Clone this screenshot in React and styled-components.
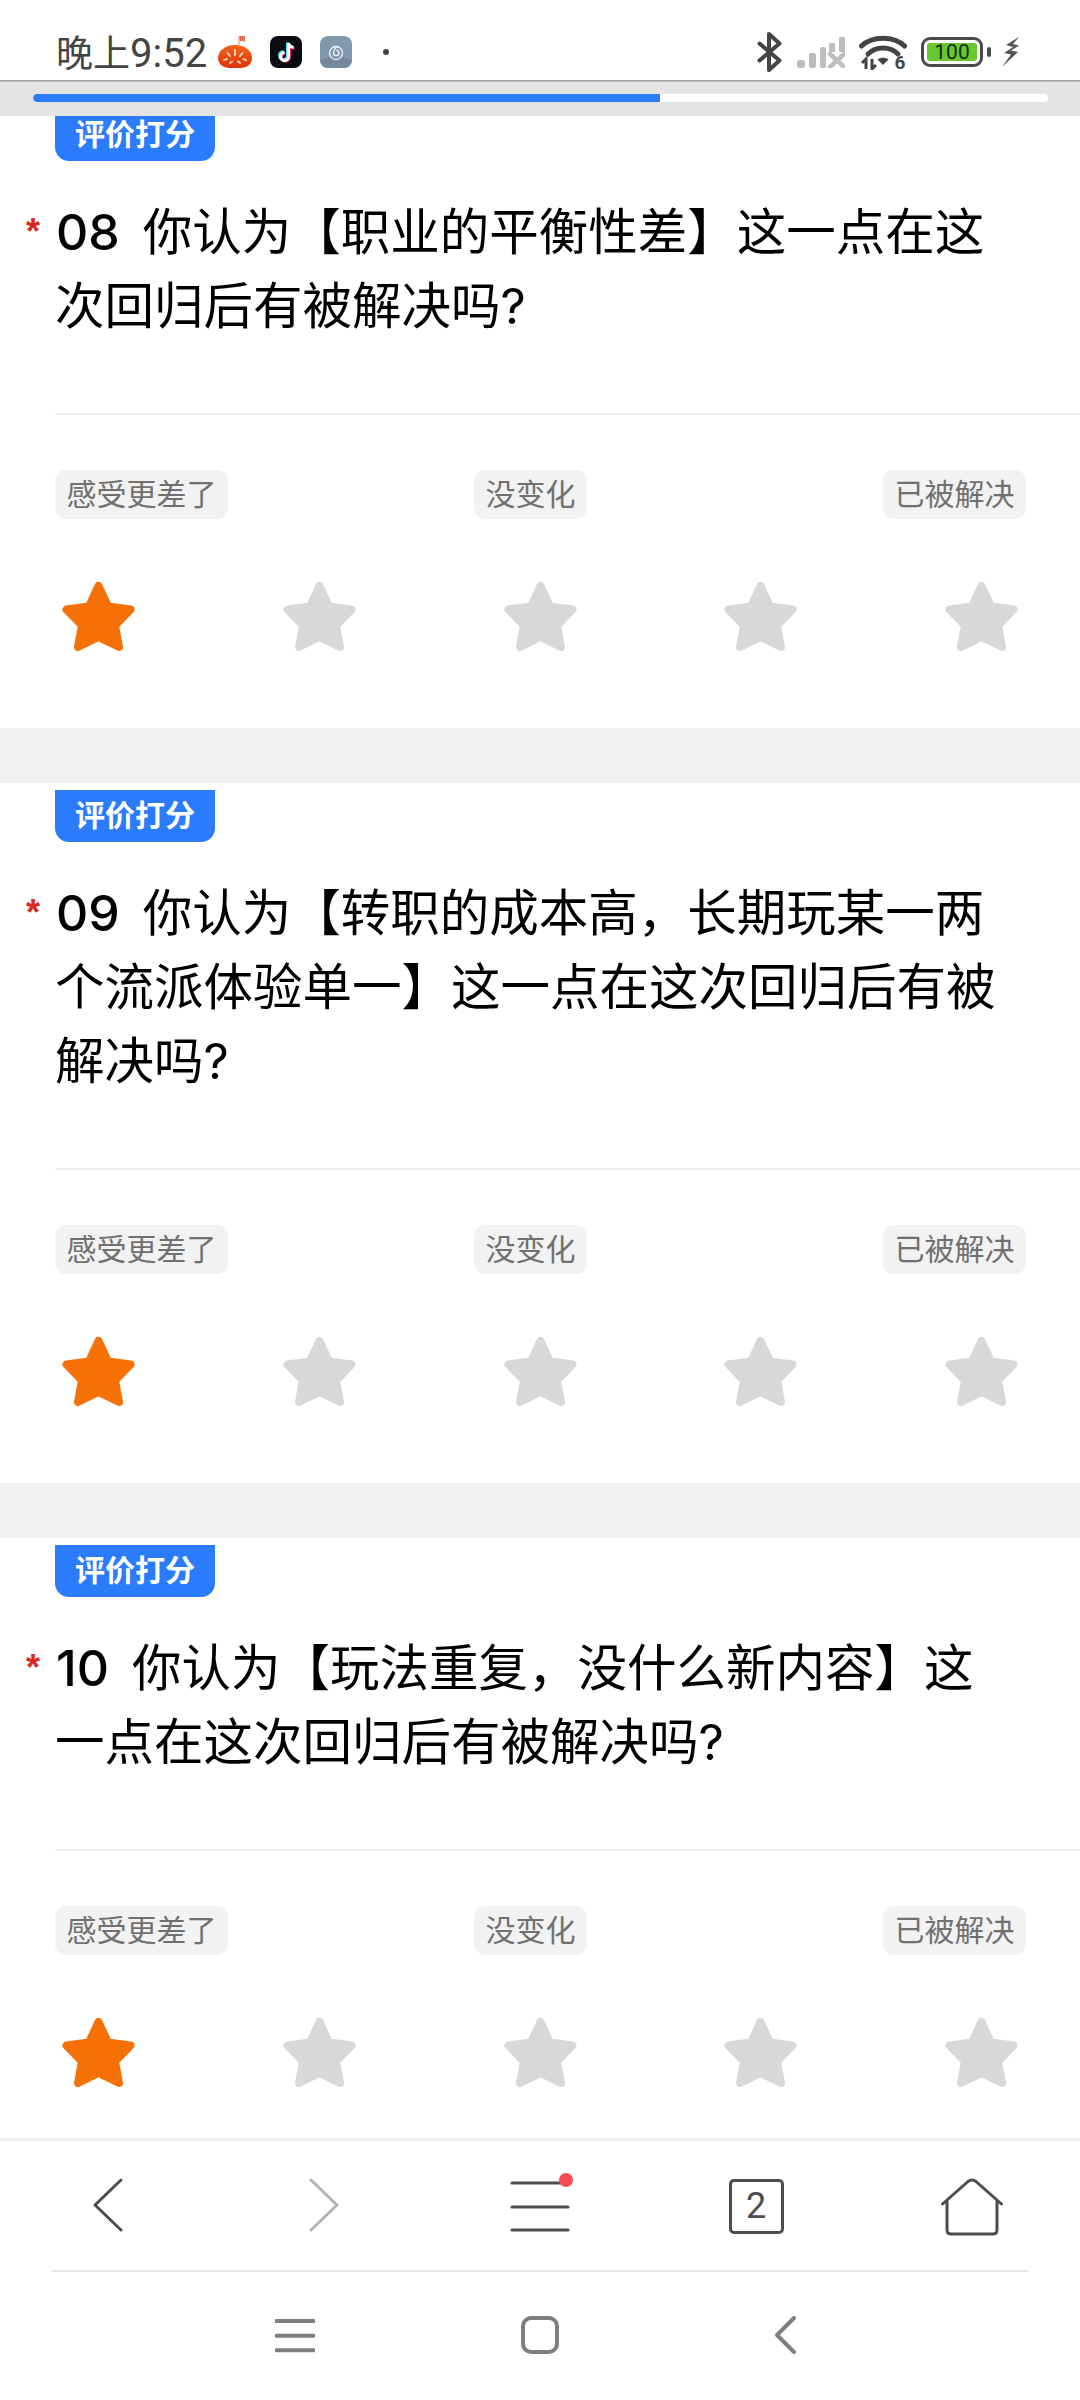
import React from "react";
import styled, { createGlobalStyle } from "styled-components";

const GlobalStyle = createGlobalStyle`
  html, body {
    margin: 0;
    padding: 0;
    background: #fff;
  }
`;

const Page = styled.div`
  width: 1080px;
  height: 2400px;
  display: flex;
  flex-direction: column;
  overflow: hidden;
  background: #fff;
  font-family: "Noto Sans CJK SC", "Noto Sans", sans-serif;
`;

const StatusBar = styled.header`
  flex: none;
  height: 80px;
  box-sizing: border-box;
  display: flex;
  align-items: center;
  padding: 24px 60px 0 56px;
  background: #fff;
`;

const StatusEdge = styled.div`
  flex: none;
  height: 2px;
  background: linear-gradient(#9d9d9d, #c8c8c8);
`;

const Time = styled.span`
  font-size: 37px;
  line-height: 40px;
  color: #444;
  font-family: "Noto Sans CJK SC", sans-serif;
  margin-right: 11px;
  .num {
    font-family: Roboto, sans-serif;
    font-size: 40px;
  }
`;

const AppIcons = styled.div`
  display: flex;
  align-items: center;
  gap: 18px;
`;

const Dot = styled.i`
  width: 6px;
  height: 6px;
  border-radius: 50%;
  background: #444;
  margin-left: 31px;
`;

const StatusRight = styled.div`
  margin-left: auto;
  display: flex;
  align-items: center;
`;

const Battery = styled.div`
  width: 62px;
  height: 30px;
  margin: 0 19px 0 14px;
  box-sizing: border-box;
  border: 3px solid #4a4a4a;
  border-radius: 9px;
  padding: 3px;
  position: relative;
  display: flex;
  &::after {
    content: "";
    position: absolute;
    right: -11px;
    top: 7px;
    width: 4px;
    height: 10px;
    border-radius: 2px;
    background: #4a4a4a;
  }
`;

const BatteryFill = styled.span`
  flex: 1;
  background: #65c92f;
  border-radius: 3px;
  color: #1c2b12;
  font-family: Roboto, sans-serif;
  font-size: 21px;
  line-height: 18px;
  text-align: center;
`;

const ProgressWrap = styled.div`
  flex: none;
  height: 34px;
  box-sizing: border-box;
  padding: 12px 32px 0 33px;
  background: #e4e4e4;
`;

const ProgressTrack = styled.div`
  height: 8px;
  border-radius: 4px;
  background: #fff;
  overflow: hidden;
`;

const ProgressFill = styled.div`
  height: 100%;
  border-radius: 4px 0 0 4px;
  background: #2b7cfd;
`;

const Scroller = styled.main`
  flex: 1;
  min-height: 0;
  overflow: hidden;
  display: flex;
  flex-direction: column;
`;

const Card = styled.section`
  flex: none;
  padding: 7px 0 76px;
  background: #fff;
  & + & {
    border-top: 55px solid #f1f1f1;
  }
  &:first-child {
    margin-top: -14px;
  }
`;

const Badge = styled.div`
  width: 160px;
  height: 52px;
  margin-left: 55px;
  background: #2b7cfd;
  border-radius: 0 0 14px 14px;
  color: #fff;
  font-size: 30px;
  font-weight: 700;
  line-height: 46px;
  text-align: center;
`;

const Question = styled.h2`
  position: relative;
  margin: 31px 0 73px;
  padding: 0 70px 0 55px;
  font-size: 49.5px;
  font-weight: 400;
  line-height: 74px;
  color: #000;
  &::before {
    content: "*";
    position: absolute;
    left: 26px;
    top: 15px;
    font-family: "Liberation Sans", sans-serif;
    font-weight: 700;
    font-size: 36px;
    line-height: 50px;
    color: #d9291c;
  }
`;

const QuestionNo = styled.span`
  font-family: Inter, sans-serif;
  font-size: 50px;
  font-weight: 500;
  line-height: 1;
  margin: 0 23px 0 1px;
`;

const Latin = styled.span`
  font-family: Inter, sans-serif;
  line-height: 1;
`;

const Divider = styled.div`
  height: 2px;
  margin-left: 55px;
  background: #efefef;
`;

const TagRow = styled.div`
  display: flex;
  justify-content: space-between;
  margin: 55px 54px 0 55px;
`;

const Tag = styled.span`
  height: 49px;
  padding: 0 11.5px;
  margin-right: ${({ $shift }) => ($shift ? "50px" : "0")};
  border-radius: 11px;
  background: #f2f2f2;
  color: #707070;
  font-size: 30px;
  line-height: 44px;
`;

const StarRow = styled.div`
  display: flex;
  justify-content: space-between;
  margin: 62px 62px 0 62px;
`;

const StarIcon = styled.svg`
  display: block;
  width: 73px;
  height: 71px;
  fill: ${({ $on }) => ($on ? "#f57105" : "#d8d8d8")};
  stroke: ${({ $on }) => ($on ? "#f57105" : "#d8d8d8")};
  stroke-width: 8;
  stroke-linejoin: round;
`;

const Toolbar = styled.nav`
  flex: none;
  height: 132px;
  box-sizing: border-box;
  border-top: 3px solid #f1f1f1;
  display: grid;
  grid-template-columns: repeat(5, 216px);
  background: #fff;
`;

const ToolButton = styled.div`
  position: relative;
  display: flex;
  align-items: center;
  justify-content: center;
  padding-top: 2px;
`;

const TabCount = styled.div`
  width: 55px;
  height: 55px;
  box-sizing: border-box;
  border: 3px solid #4d4d4d;
  border-radius: 5px;
  color: #4d4d4d;
  font-family: Roboto, sans-serif;
  font-size: 36px;
  line-height: 49px;
  text-align: center;
`;

const RedDot = styled.i`
  position: absolute;
  left: 127px;
  top: 32px;
  width: 14px;
  height: 14px;
  border-radius: 50%;
  background: #fb4a52;
`;

const Rule = styled.div`
  flex: none;
  height: 2px;
  margin: 0 52px;
  background: #e8e8e8;
`;

const SystemNav = styled.nav`
  flex: none;
  height: 128px;
  display: flex;
  justify-content: center;
  align-items: center;
  padding-bottom: 3px;
  box-sizing: border-box;
  background: #fff;
`;

const SystemButton = styled.div`
  width: 245px;
  display: flex;
  justify-content: center;
`;

const TomatoIcon = () => (
  <svg width="34" height="32" viewBox="0 0 34 32">
    <defs>
      <linearGradient id="tomatoFill" x1="0" y1="0" x2="0" y2="1">
        <stop offset="0" stopColor="#f0661f" />
        <stop offset="1" stopColor="#e03208" />
      </linearGradient>
    </defs>
    <path d="M21 0h6v6l-2.500-1.500L22 5.500z" fill="#ee6a4d" />
    <path d="M21 0v9" stroke="#ee8a70" strokeWidth="1" />
    <path d="M17 9c10 0 17 6 17 13 0 6-5 10-12 10h-10C5 32 0 28 0 22 0 15 7 9 17 9z" fill="url(#tomatoFill)" />
    <path d="M17 14v5M9.500 17l2.500 3M24.500 17l-2.500 3M6 24l3-1M28 24l-3-1M12 27l2-1.500M22 27l-2-1.500" stroke="#ffe2c8" strokeWidth="1.800" strokeLinecap="round" />
  </svg>
);

const TiktokIcon = () => (
  <svg width="32" height="32" viewBox="0 0 32 32">
    <rect width="32" height="32" rx="8" fill="#0b0b14" />
    <path d="M17.500 6.500v13a4 4 0 1 1-4-4" fill="none" stroke="#2fe6e8" strokeWidth="3" />
    <path d="M19.500 8c.5 2.500 2.300 4 5 4.300M19.500 8v13a4 4 0 1 1-4-4" fill="none" stroke="#f2295b" strokeWidth="3" />
    <path d="M18.500 7v13.500a4 4 0 1 1-4-4M18.500 7c.5 2.500 2.300 4 5 4.300" fill="none" stroke="#fff" strokeWidth="3" />
  </svg>
);

const NeteaseIcon = () => (
  <svg width="32" height="32" viewBox="0 0 32 32">
    <rect width="32" height="32" rx="8" fill="#8099af" />
    <path d="M0 24c8-4 24-4 32 0v0a8 8 0 0 1-8 8H8a8 8 0 0 1-8-8z" fill="#76899b" />
    <circle cx="16" cy="17" r="6.500" fill="none" stroke="#f2f5f7" strokeWidth="1.300" />
    <path d="M18 10c-3 2-4.500 4-4.500 7a2.700 2.700 0 1 0 2.700-2.700" fill="none" stroke="#f2f5f7" strokeWidth="1.300" />
  </svg>
);

const BluetoothIcon = () => (
  <svg width="26" height="40" viewBox="0 0 26 40" fill="none" stroke="#444" strokeWidth="4" strokeLinejoin="round" strokeLinecap="round">
    <path d="M2.500 11.500l20 17L12 38V2l10.500 9.500-20 17" />
  </svg>
);

const SignalIcon = () => (
  <svg width="48" height="32" viewBox="0 0 48 32" fill="#bdbdbd" style={{ marginLeft: 14 }}>
    <rect x="0" y="24" width="8" height="8" rx="3" />
    <rect x="12" y="17" width="7" height="15" rx="2" />
    <rect x="23" y="11" width="6" height="21" rx="2" />
    <rect x="32" y="7" width="6" height="9" rx="1" />
    <rect x="42" y="1" width="6" height="15" rx="1" />
    <path d="M33 18l14 13M47 18L33 31" stroke="#bdbdbd" strokeWidth="4.500" strokeLinecap="round" />
  </svg>
);

const WifiIcon = () => (
  <svg width="48" height="36" viewBox="0 0 48 36" style={{ marginLeft: 14 }}>
    <path d="M2.500 12C13 1.500 35 1.500 45.500 12" fill="none" stroke="#444" strokeWidth="5" strokeLinecap="round" />
    <path d="M9 20C17 12 31 12 39 20" fill="none" stroke="#444" strokeWidth="5" strokeLinecap="round" />
    <path d="M18.500 25.500c3-2.500 8-2.500 11 0l-5.500 5.500z" fill="#444" />
    <path d="M3 29l4-4v10M13 25v10l4-4" fill="none" stroke="#444" strokeWidth="3" />
    <text x="41" y="35" fontFamily="Roboto, sans-serif" fontWeight="700" fontSize="19" fill="#444" textAnchor="middle">6</text>
  </svg>
);

const ChargeIcon = () => (
  <svg width="18" height="30" viewBox="0 0 18 30" fill="#555">
    <path d="M17 0L4 8l7 2-9 6 7 1.500L0 30l16-15-7-1.500 8-5-6-1.500z" />
  </svg>
);

const Star = ({ on }) => (
  <StarIcon $on={on} viewBox="0 0 73 71">
    <polygon points="36.500,5 46,25.500 68.500,28.500 53,44.500 57,66 36.500,56 16,66 20,44.500 4.500,28.500 27,25.500" />
  </StarIcon>
);

const ToolIcon = ({ d, color = "#4d4d4d", size = 60, width = 3 }) => (
  <svg width={size} height={size} viewBox="0 0 60 60" fill="none" stroke={color} strokeWidth={width} strokeLinecap="round" strokeLinejoin="round">
    <path d={d} />
  </svg>
);

const questions = [
  { no: "08", text: "你认为【职业的平衡性差】这一点在这次回归后有被解决吗" },
  { no: "09", text: "你认为【转职的成本高，长期玩某一两个流派体验单一】这一点在这次回归后有被解决吗" },
  { no: "10", text: "你认为【玩法重复，没什么新内容】这一点在这次回归后有被解决吗" },
];

export default function App() {
  return (
    <Page lang="zh-CN">
      <GlobalStyle />
      <StatusBar>
        <Time>
          晚上<span className="num">9:52</span>
        </Time>
        <AppIcons>
          <TomatoIcon />
          <TiktokIcon />
          <NeteaseIcon />
        </AppIcons>
        <Dot />
        <StatusRight>
          <BluetoothIcon />
          <SignalIcon />
          <WifiIcon />
          <Battery>
            <BatteryFill>100</BatteryFill>
          </Battery>
          <ChargeIcon />
        </StatusRight>
      </StatusBar>
      <StatusEdge />
      <ProgressWrap>
        <ProgressTrack>
          <ProgressFill style={{ width: "61.8%" }} />
        </ProgressTrack>
      </ProgressWrap>
      <Scroller>
        {questions.map((q) => (
          <Card key={q.no}>
            <Badge>评价打分</Badge>
            <Question>
              <QuestionNo>{q.no}</QuestionNo>
              {q.text}
              <Latin>?</Latin>
            </Question>
            <Divider />
            <TagRow>
              <Tag>感受更差了</Tag>
              <Tag $shift>没变化</Tag>
              <Tag>已被解决</Tag>
            </TagRow>
            <StarRow>
              {[0, 1, 2, 3, 4].map((i) => (
                <Star key={i} on={i === 0} />
              ))}
            </StarRow>
          </Card>
        ))}
      </Scroller>
      <Toolbar>
        <ToolButton>
          <ToolIcon d="M43 3L17 28l26 25" />
        </ToolButton>
        <ToolButton>
          <ToolIcon d="M17 3l26 25-26 25" color="#b3b3b3" />
        </ToolButton>
        <ToolButton>
          <ToolIcon d="M2 6h56M2 30h56M2 53h56" />
          <RedDot />
        </ToolButton>
        <ToolButton>
          <TabCount>2</TabCount>
        </ToolButton>
        <ToolButton>
          <svg width="62" height="58" viewBox="0 0 62 58" fill="none" stroke="#4d4d4d" strokeWidth="3" strokeLinejoin="round" strokeLinecap="round">
            <path d="M1.500 26L27 3.500q4-3 8 0L60.500 26M6 22v30q0 4 4 4h42q4 0 4-4V22" />
          </svg>
        </ToolButton>
      </Toolbar>
      <Rule />
      <SystemNav>
        <SystemButton>
          <ToolIcon size={40} d="M2 9h56M2 31h56M2 53h56" color="#7f7f7f" width={6} />
        </SystemButton>
        <SystemButton>
          <svg width="38" height="38" viewBox="0 0 38 38" fill="none" stroke="#7f7f7f" strokeWidth="4">
            <rect x="2" y="2" width="34" height="34" rx="8" />
          </svg>
        </SystemButton>
        <SystemButton>
          <svg width="22" height="38" viewBox="0 0 22 38" fill="none" stroke="#7f7f7f" strokeWidth="4" strokeLinecap="round" strokeLinejoin="round">
            <path d="M20 2L3 19l17 17" />
          </svg>
        </SystemButton>
      </SystemNav>
    </Page>
  );
}
